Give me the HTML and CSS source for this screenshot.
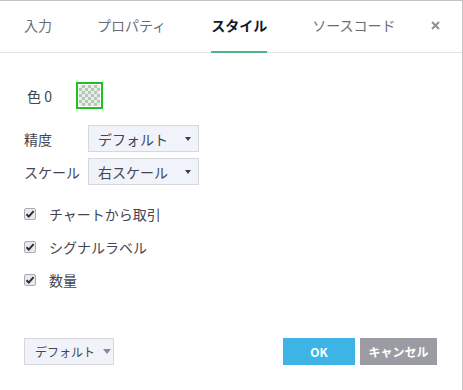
FILE: index.html
```html
<!DOCTYPE html>
<html lang="ja">
<head>
    <meta charset="UTF-8">
    <title>スタイル</title>
    <link rel="stylesheet" href="styles.css">
</head>
<body>
    <div class="dialog">
        <header class="tabs">
            <span class="tab">入力</span>
            <span class="tab">プロパティ</span>
            <span class="tab active">スタイル</span>
            <span class="tab">ソースコード</span>
            <span class="close"><svg width="9" height="9" viewBox="0 0 9 9"><path d="M1 1 L8 8 M8 1 L1 8" stroke="#8e919a" stroke-width="2"/></svg></span>
        </header>

        <div class="content">
            <div class="color-row">
                <span class="color-label">色 0</span>
                <span class="swatch"><span class="checker"></span></span>
            </div>

            <div class="fields">
                <span class="field-label">精度</span>
                <div class="select"><span>デフォルト</span><span class="caret"></span></div>
                <span class="field-label">スケール</span>
                <div class="select"><span>右スケール</span><span class="caret"></span></div>
            </div>

            <div class="checks">
                <label class="check"><span class="box"><svg width="10" height="10" viewBox="0 0 10 10"><path d="M1.5 5.2 L3.8 7.6 L8.6 2.2" fill="none" stroke="#2a2c33" stroke-width="2"/></svg></span>チャートから取引</label>
                <label class="check"><span class="box"><svg width="10" height="10" viewBox="0 0 10 10"><path d="M1.5 5.2 L3.8 7.6 L8.6 2.2" fill="none" stroke="#2a2c33" stroke-width="2"/></svg></span>シグナルラベル</label>
                <label class="check"><span class="box"><svg width="10" height="10" viewBox="0 0 10 10"><path d="M1.5 5.2 L3.8 7.6 L8.6 2.2" fill="none" stroke="#2a2c33" stroke-width="2"/></svg></span>数量</label>
            </div>
        </div>

        <footer class="footer">
            <div class="defaults">デフォルト<span class="caret small"></span></div>
            <div class="actions">
                <button class="btn ok">OK</button>
                <button class="btn cancel">キャンセル</button>
            </div>
        </footer>
    </div>
</body>
</html>
```

FILE: styles.css
```css
body {
    margin: 0;
    font-family: "Noto Sans CJK JP", "Noto Sans", sans-serif;
    color: #434651;
    background: #fff;
}
.dialog {
    width: 462px;
    height: 389px;
    border-top: 1px solid #c3c3c3;
    border-right: 1px solid #c3c3c3;
    display: flex;
    flex-direction: column;
    background: #fff;
}
.tabs {
    display: flex;
    align-items: stretch;
    height: 51px;
    padding-left: 24px;
    gap: 45px;
    border-bottom: 1px solid #e0e3eb;
    position: relative;
}
.tab {
    font-size: 14px;
    color: #6a6d78;
    display: flex;
    align-items: center;
    padding-bottom: 3px;
    border-bottom: 2px solid transparent;
    margin-bottom: -1px;
}
.tab.active {
    color: #131722;
    font-weight: bold;
    border-bottom-color: #4fb584;
}
.close {
    position: absolute;
    right: 22px;
    top: 20px;
    display: flex;
}
.content {
    padding: 29px 0 0 24px;
}
.color-row {
    display: flex;
    align-items: center;
    height: 27px;
}
.color-label {
    font-size: 14px;
    margin-left: 3px;
    width: 49px;
}
.swatch {
    width: 21px;
    height: 21px;
    border: 2px solid #1fc21f;
    padding: 1px;
    background: #fff;
    display: block;
}
.swatch .checker {
    display: block;
    width: 21px;
    height: 21px;
    background-color: #e6efe6;
    background-image:
        linear-gradient(45deg, #b9c5b9 25%, transparent 25%, transparent 75%, #b9c5b9 75%),
        linear-gradient(45deg, #b9c5b9 25%, transparent 25%, transparent 75%, #b9c5b9 75%);
    background-size: 6px 6px;
    background-position: 0 0, 3px 3px;
}
.fields {
    display: grid;
    grid-template-columns: 64px 111px;
    row-gap: 6px;
    align-items: center;
    margin-top: 16px;
}
.field-label {
    font-size: 14px;
}
.select {
    height: 25px;
    border: 1px solid #d6d8de;
    background: #f0f3fa;
    display: flex;
    align-items: center;
    justify-content: space-between;
    padding: 0 7px 0 9px;
    font-size: 14px;
    color: #434651;
}
.caret {
    width: 0;
    height: 0;
    border-left: 3.5px solid transparent;
    border-right: 3.5px solid transparent;
    border-top: 4px solid #3a3c44;
}
.caret.small {
    border-top-color: #8a8c94;
    border-left-width: 4px;
    border-right-width: 4px;
    border-top-width: 5px;
    margin-left: 8px;
}
.checks {
    margin-top: 12px;
}
.check {
    display: flex;
    align-items: center;
    height: 33px;
    font-size: 14px;
}
.box {
    width: 10px;
    height: 10px;
    border: 1px solid #a9abb1;
    border-radius: 2px;
    background: #e9eaee;
    margin-right: 13px;
    display: flex;
    align-items: center;
    justify-content: center;
}
.footer {
    margin-top: auto;
    display: flex;
    justify-content: space-between;
    align-items: center;
    padding: 0 25px 25px 24px;
}
.defaults {
    height: 25px;
    width: 78px;
    border: 1px solid #d6d8de;
    background: #f0f3fa;
    font-size: 12px;
    color: #434651;
    display: flex;
    align-items: center;
    padding-left: 10px;
}
.actions {
    display: flex;
    gap: 5px;
}
.btn {
    height: 27px;
    border: none;
    color: #fff;
    font-family: "Noto Sans CJK JP", "Noto Sans", sans-serif;
    font-size: 12px;
    font-weight: bold;
    padding: 0;
}
.ok {
    width: 72px;
    background: #3db4e5;
}
.cancel {
    width: 77px;
    background: #9b9ca3;
}
```
